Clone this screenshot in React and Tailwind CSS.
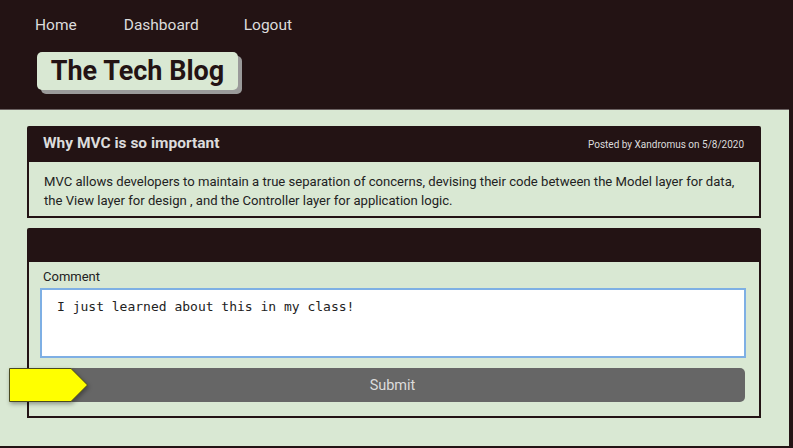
const App = () => {
    return (
        <div className="w-[793px] h-[448px] bg-[#231314] overflow-hidden font-['Roboto',sans-serif]">
            <div className="w-[789px] h-[446px] bg-[#d9e8d3] flex flex-col">
                {/* Header */}
                <header className="h-[110px] bg-[#231314] border-b border-[#6b6262] shrink-0">
                    <nav className="flex items-center h-[51px] pl-[35px] text-[15.5px] text-[#dcdcdc]">
                        <a className="mr-[47px]">Home</a>
                        <a className="mr-[45px]">Dashboard</a>
                        <a>Logout</a>
                    </nav>
                    <div className="ml-[37px] mt-[1px] w-[201px] h-[38px] rounded-[5px] bg-[#d9e8d3] shadow-[4px_4px_0_#9a9a9a] flex items-center justify-center">
                        <h1 className="text-[27px] font-bold text-[#231314] leading-none">The Tech Blog</h1>
                    </div>
                </header>

                <main className="px-[27px] pt-[16px] flex flex-col gap-[10px]">
                    {/* Post */}
                    <div className="w-[734px]">
                        <div className="h-[36px] bg-[#231314] flex items-center justify-between pl-[16px] pr-[17px] rounded-t-[2px]">
                            <h2 className="text-[15.5px] font-bold text-[#dcdcdc]">Why MVC is so important</h2>
                            <span className="text-[10px] text-[#dcdcdc]">Posted by Xandromus on 5/8/2020</span>
                        </div>
                        <div className="h-[56px] border-2 border-t-0 border-[#231314] px-[15px] pt-[10px] text-[13.1px] leading-[19px] text-[#222]">
                            MVC allows developers to maintain a true separation of concerns, devising their code between the Model layer for data, the View layer for design , and the Controller layer for application logic.
                        </div>
                    </div>

                    {/* Comment form */}
                    <div className="w-[734px]">
                        <div className="h-[34px] bg-[#231314] rounded-t-[2px]" />
                        <div className="h-[156px] border-2 border-t-0 border-[#231314] px-[11px] pt-[7px]">
                            <label className="block ml-[3px] text-[13px] text-[#222] leading-[16px] mb-[3px]">Comment</label>
                            <textarea
                                readOnly
                                defaultValue="I just learned about this in my class!"
                                className="block w-[706px] h-[70px] border-2 border-[#7eafe4] bg-white resize-none px-[15px] pt-[8px] text-[13px] leading-[18px] text-[#222] font-['DejaVu_Sans_Mono',monospace] outline-none"
                            />
                            <div className="relative mt-[10px]">
                                <button className="w-[705px] h-[34px] rounded-[5px] bg-[#666666] pt-[2px] text-[14.5px] text-[#dcdcdc]">
                                    Submit
                                </button>
                                {/* Pointer marker */}
                                <svg
                                    className="absolute left-[-31px] top-0 drop-shadow-[1px_2px_2px_rgba(0,0,0,0.35)]"
                                    width="80"
                                    height="34"
                                    viewBox="0 0 80 34"
                                >
                                    <polygon points="0.5,0.5 62,0.5 78.5,17 62,33.5 0.5,33.5" fill="#ffff00" stroke="#4a4a20" strokeWidth="1" />
                                </svg>
                            </div>
                        </div>
                    </div>
                </main>
            </div>
        </div>
    );
};

export default App;
